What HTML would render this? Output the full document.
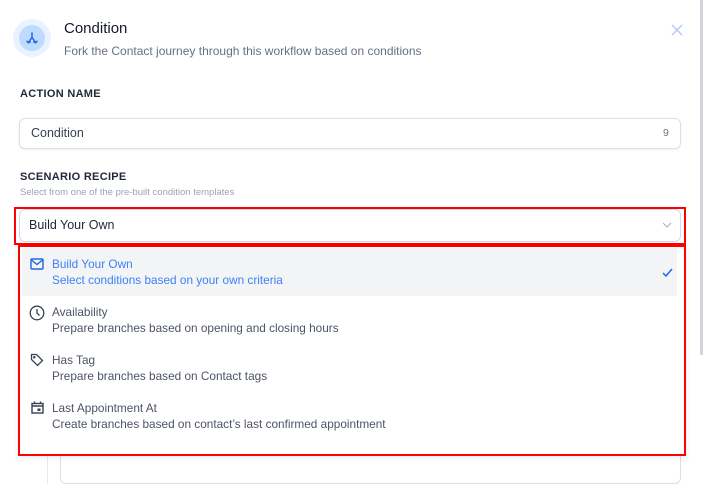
<!DOCTYPE html>
<html><head><style>
*{box-sizing:border-box;margin:0;padding:0}
body{width:703px;height:476px;overflow:hidden;background:#fff;font-family:"Liberation Sans",sans-serif;position:relative;color:#111827}
.abs{position:absolute;line-height:1.2;white-space:nowrap}
.h{font-size:11px;font-weight:bold;color:#1f2937;letter-spacing:.3px}
.o{font-size:11.8px;color:#4b5563}
</style></head><body>
<div class="abs" style="left:13px;top:19px;width:38px;height:38px;border-radius:50%;background:#eaf2ff"></div>
<div class="abs" style="left:19px;top:25px;width:26px;height:26px;border-radius:50%;background:#bfdbfe"></div>
<svg class="abs" style="left:25px;top:31px" width="14" height="14" viewBox="0 0 14 14" fill="none" stroke="#2563eb" stroke-width="1.5" stroke-linecap="round" stroke-linejoin="round"><path d="M7 2V6.5L3.5 11.5M7 6.5L10.5 11.5M2 10.3l1.5 1.5 1.6-.9M12 10.3l-1.5 1.5-1.6-.9"/></svg>
<div class="abs" style="left:64px;top:20px;font-size:15px;color:#111827">Condition</div>
<div class="abs" style="left:64px;top:44px;font-size:12px;color:#667085">Fork the Contact journey through this workflow based on conditions</div>
<svg class="abs" style="left:671px;top:24px" width="12" height="12" viewBox="0 0 12 12" stroke="#b4c3f5" stroke-width="1.3"><path d="M1 1L11 11M11 1L1 11"/></svg>
<div class="abs h" style="left:20px;top:88px">ACTION NAME</div>
<div class="abs" style="left:19px;top:118px;width:662px;height:31px;border:1px solid #dcdfe6;border-radius:6px;box-shadow:0 1px 2px rgba(0,0,0,.06)"></div>
<div class="abs" style="left:31px;top:126px;font-size:12.5px;color:#374151">Condition</div>
<div class="abs" style="left:663px;top:127px;font-size:10.5px;color:#6b7280">9</div>
<div class="abs h" style="left:20px;top:171px">SCENARIO RECIPE</div>
<div class="abs" style="left:20px;top:187px;font-size:9.5px;color:#9ca3af">Select from one of the pre-built condition templates</div>
<div class="abs" style="left:19px;top:209px;width:662px;height:33px;border:1.5px solid #cfd8ee;border-radius:6px;background:#fff"></div>
<div class="abs" style="left:29px;top:218px;font-size:12.5px;color:#1f2937">Build Your Own</div>
<svg class="abs" style="left:662px;top:222px" width="10" height="6" viewBox="0 0 10 6" fill="none" stroke="#aab0bc" stroke-width="1"><path d="M1 1l4 4 4-4"/></svg>
<div class="abs" style="left:14px;top:207px;width:672px;height:38px;border:2px solid #f00"></div>
<div class="abs" style="left:60px;top:444px;width:621px;height:40px;border:1px solid #dcdfe6;border-radius:6px"></div>
<div class="abs" style="left:47px;top:444px;width:1px;height:40px;background:#e5e7eb"></div>
<div class="abs" style="left:18px;top:245px;width:668px;height:211px;background:#fff;box-shadow:0 2px 6px rgba(0,0,0,.08)"></div>
<div class="abs" style="left:22px;top:248px;width:655px;height:48px;background:#f3f4f6"></div>
<svg class="abs" style="left:30px;top:258px" width="14" height="12" viewBox="0 0 14 12" fill="none" stroke="#2563eb" stroke-width="1.4"><rect x="1" y="1" width="12" height="10" rx="1"/><path d="M1.5 2l5.5 4.5 5.5-4.5"/></svg>
<div class="abs o" style="left:52px;top:257px;color:#3b82f6">Build Your Own</div>
<div class="abs o" style="left:52px;top:273px;color:#3b82f6">Select conditions based on your own criteria</div>
<svg class="abs" style="left:662px;top:268px" width="11" height="9" viewBox="0 0 11 9" fill="none" stroke="#2563eb" stroke-width="1.5"><path d="M1 5l3 3 6-7"/></svg>
<svg class="abs" style="left:29px;top:305px" width="16" height="16" viewBox="0 0 16 16" fill="none" stroke="#374151" stroke-width="1.3"><circle cx="8" cy="8" r="6.8"/><path d="M8 4v4l2.5 2.5"/></svg>
<div class="abs o" style="left:52px;top:305px">Availability</div>
<div class="abs o" style="left:52px;top:321px">Prepare branches based on opening and closing hours</div>
<svg class="abs" style="left:30px;top:353px" width="14" height="14" viewBox="0 0 14 14" fill="none" stroke="#374151" stroke-width="1.3"><path d="M1.5 1.5h5l6 6-5 5-6-6z"/><circle cx="4.3" cy="4.3" r=".6" fill="#374151"/></svg>
<div class="abs o" style="left:52px;top:353px">Has Tag</div>
<div class="abs o" style="left:52px;top:369px">Prepare branches based on Contact tags</div>
<svg class="abs" style="left:31px;top:401px" width="13" height="13" viewBox="0 0 13 13" fill="none" stroke="#374151" stroke-width="1.4"><rect x="1" y="2.5" width="11" height="9.5"/><path d="M1 5h11M3.5 0.5v2.5M9.5 0.5v2.5"/><rect x="6.5" y="7.5" width="3" height="2.5" fill="#374151" stroke="none"/></svg>
<div class="abs o" style="left:52px;top:401px">Last Appointment At</div>
<div class="abs o" style="left:52px;top:417px">Create branches based on contact’s last confirmed appointment</div>
<div class="abs" style="left:18px;top:245px;width:668px;height:211px;border:2px solid #f00"></div>
<div class="abs" style="left:700px;top:0;width:3px;height:355px;background:#d1d5db"></div>
</body></html>
